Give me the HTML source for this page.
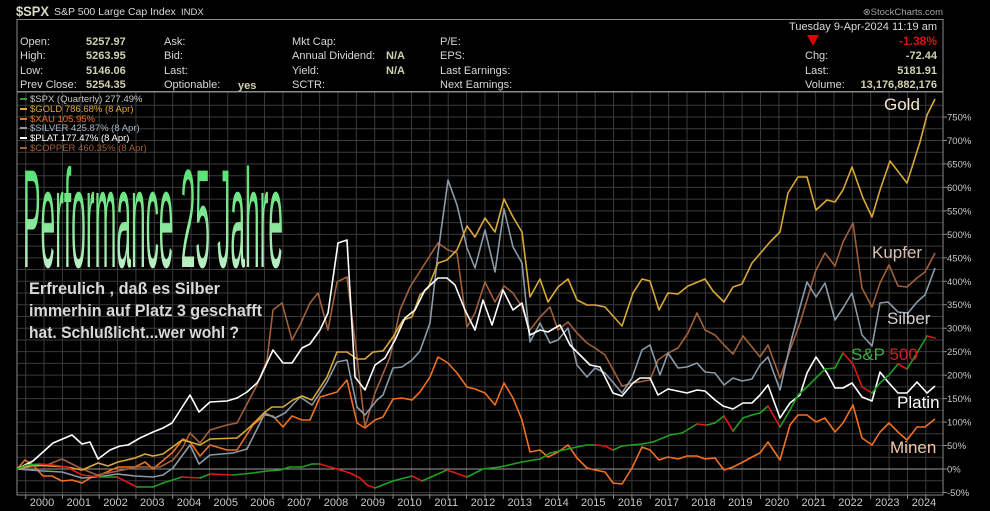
<!DOCTYPE html>
<html><head><meta charset="utf-8"><style>
html,body{margin:0;padding:0;background:#000;width:990px;height:511px;overflow:hidden}
svg{display:block;font-family:"Liberation Sans",sans-serif}
</style></head><body>
<svg width="990" height="511" viewBox="0 0 990 511" xmlns="http://www.w3.org/2000/svg">
<defs>
<linearGradient id="tg" x1="0" y1="0" x2="0" y2="1"><stop offset="0" stop-color="#3fe060"/><stop offset="0.6" stop-color="#90e8a0"/><stop offset="1" stop-color="#e8f4e8"/></linearGradient>
<linearGradient id="lg" x1="0" y1="0" x2="0" y2="1"><stop offset="0" stop-color="#f0d8b8"/><stop offset="1" stop-color="#fff4e8"/></linearGradient>
</defs>
<rect width="990" height="511" fill="#000"/>
<text x="16" y="16" fill="#d8d8c8" font-size="14" font-weight="bold" textLength="33" lengthAdjust="spacingAndGlyphs">$SPX</text>
<text x="54" y="15" fill="#d8d8d8" font-size="10.5">S&amp;P 500 Large Cap Index</text>
<text x="181" y="15" fill="#d8d8d8" font-size="9.5">INDX</text>
<text x="943" y="15" fill="#a0a0a0" font-size="9.5" text-anchor="end">⊗StockCharts.com</text>
<rect x="17" y="19.5" width="926" height="72" fill="none" stroke="#8a8a8a" stroke-width="1"/>
<g font-size="11" fill="#d8d8d8">
<text x="20" y="45">Open:</text><text x="20" y="59">High:</text><text x="20" y="74">Low:</text><text x="20" y="88">Prev Close:</text>
<text x="164" y="45">Ask:</text><text x="164" y="59">Bid:</text><text x="164" y="74">Last:</text><text x="164" y="88">Optionable:</text>
<text x="292" y="45">Mkt Cap:</text><text x="292" y="59">Annual Dividend:</text><text x="292" y="74">Yield:</text><text x="292" y="88">SCTR:</text>
<text x="440" y="45">P/E:</text><text x="440" y="59">EPS:</text><text x="440" y="74">Last Earnings:</text><text x="440" y="88">Next Earnings:</text>
<text x="805" y="59">Chg:</text><text x="805" y="74">Last:</text><text x="805" y="88">Volume:</text>
<text x="937" y="30" text-anchor="end">Tuesday  9-Apr-2024  11:19 am</text>
</g>
<g font-size="11" fill="#d0d0b0" font-weight="bold">
<text x="86" y="45">5257.97</text><text x="86" y="59">5263.95</text><text x="86" y="74">5146.06</text><text x="86" y="88">5254.35</text>
<text x="238" y="89">yes</text>
<text x="386" y="59">N/A</text><text x="386" y="74">N/A</text>
<text x="937" y="59" text-anchor="end">-72.44</text><text x="937" y="74" text-anchor="end">5181.91</text><text x="937" y="88" text-anchor="end">13,176,882,176</text>
<text x="937" y="45" text-anchor="end" fill="#e01010" font-size="12">-1.38%</text>
</g>
<polygon points="807,35 819,35 813,46" fill="#e00000"/>
<g stroke="#3a3a3a" stroke-width="1" id="grid"></g>
<rect x="17" y="92" width="926" height="403" fill="none" stroke="#8a8a8a" stroke-width="1"/>
<line x1="17" y1="469" x2="943" y2="469" stroke="#9a9a9a" stroke-width="1"/>
<g id="axis" font-size="9.5" fill="#c8c8c8"></g>
<g id="lines" fill="none" stroke-width="1.6" stroke-linejoin="round"></g>
<g font-size="9.5">
<rect x="20" y="98" width="7" height="2" fill="#2aa02a"/><text x="30" y="102" fill="#c8c8c8">$SPX (Quarterly) 277.49%</text>
<rect x="20" y="108" width="7" height="2" fill="#e0a840"/><text x="30" y="112" fill="#e0a840">$GOLD 786.68% (8 Apr)</text>
<rect x="20" y="118" width="7" height="2" fill="#f07020"/><text x="30" y="122" fill="#f07020">$XAU 105.95%</text>
<rect x="20" y="127" width="7" height="2" fill="#8a9aa8"/><text x="30" y="131" fill="#a8b4c0">$SILVER 425.87% (8 Apr)</text>
<rect x="20" y="137" width="7" height="2" fill="#fff"/><text x="30" y="141" fill="#ffffff">$PLAT 177.47% (8 Apr)</text>
<rect x="20" y="147" width="7" height="2" fill="#a0603a"/><text x="30" y="151" fill="#a0603a">$COPPER 460.35% (8 Apr)</text>
</g>
<text x="23" y="267" font-size="140" fill="url(#tg)" textLength="260" lengthAdjust="spacingAndGlyphs">Performance 25 Jahre</text>
<g font-size="16.5" font-weight="bold" fill="#d8d8d8">
<text x="29" y="294" textLength="191" lengthAdjust="spacingAndGlyphs">Erfreulich , daß es Silber</text>
<text x="29" y="316" textLength="233" lengthAdjust="spacingAndGlyphs">immerhin auf Platz 3 geschafft</text>
<text x="29" y="338" textLength="210" lengthAdjust="spacingAndGlyphs">hat. Schlußlicht...wer wohl ?</text>
</g>
<g font-size="17">
<text x="884" y="110" fill="url(#lg)">Gold</text>
<text x="872" y="258" fill="#d8c0b0">Kupfer</text>
<text x="887" y="324" fill="#d0d0d0">Silber</text>
<text x="851" y="360" fill="#40b040">S&amp;P <tspan fill="#d02020">500</tspan></text>
<text x="897" y="408" fill="#ffffff">Platin</text>
<text x="890" y="453" fill="#f0c8a8">Minen</text>
</g>
</svg>
<script>
(function(){
var NS="http://www.w3.org/2000/svg";
function el(p,n,a,t){var e=document.createElementNS(NS,n);for(var k in a)e.setAttribute(k,a[k]);if(t)e.textContent=t;p.appendChild(e);return e;}
var g=document.getElementById('grid');
for(var x=25.7;x<943;x+=18.37)el(g,'line',{x1:x,y1:92,x2:x,y2:495});
for(var v=-50;v<=775;v+=25){var y=469-v*0.4693;if(v!==0)el(g,'line',{x1:17,y1:y,x2:943,y2:y});}
var a=document.getElementById('axis');
for(var v=-50;v<=750;v+=50){var y=469-v*0.4693;el(a,'line',{x1:943,y1:y,x2:947,y2:y,stroke:'#8a8a8a'});el(a,'text',{x:947,y:y+3.5},v+'%');}
for(var i=0;i<25;i++){var x=42+i*36.75;el(a,'text',{x:x,y:506,'text-anchor':'middle','font-size':'11'},String(2000+i));}
for(var x=25.7;x<943;x+=18.37)el(a,'line',{x1:x,y1:495,x2:x,y2:499,stroke:'#8a8a8a'});
var L=document.getElementById('lines');
function P(s){return s.trim().split(/\s+/).map(function(p){return p.split(',').map(Number);});}
function poly(pts,c){el(L,'polyline',{points:pts.map(function(p){return p.join(',')}).join(' '),stroke:c});}
var xau=P("17,469 25,460 33,465 43,476 52,476 62,481 72,480 82,483 92,477 100,475 118,467 135,467 145,462 153,469 173,452 183,439 190,442 200,456 210,445 227,450 237,450 253,425 265,415 273,416 283,427 292,416 302,420 310,420 320,397 337,392 347,380 357,423 365,428 375,420 383,417 393,399 402,398 412,400 420,392 430,377 438,357 448,363 457,373 467,387 475,389 485,393 495,405 504,383 513,398 522,420 530,452 540,450 548,457 558,452 568,445 577,458 587,468 595,470 605,472 613,483 622,484 632,468 642,447 650,450 659,460 668,457 678,459 687,456 697,456 705,459 715,458 724,470 733,467 743,462 752,457 760,453 768,442 780,460 790,425 798,415 807,415 816,422 825,418 835,432 843,423 853,405 862,438 872,445 880,432 889,423 898,432 907,440 917,427 925,427 935,419");
var copper=P("17,469 30,467 47,465 62,459 80,468 97,475 113,472 137,467 160,467 173,460 183,447 190,433 200,443 210,430 227,425 237,423 257,385 267,360 273,310 282,303 292,340 300,325 310,303 318,293 328,330 337,282 347,277 357,357 365,427 375,393 390,357 400,310 410,287 438,243 448,250 457,253 467,327 475,313 485,282 495,302 504,286 513,293 522,307 530,330 540,317 550,307 558,330 568,322 577,333 587,343 595,348 605,355 622,386 633,383 650,380 658,360 668,353 678,348 688,333 697,313 705,330 715,335 724,345 733,354 743,336 752,347 760,357 768,345 780,378 790,350 800,323 807,300 816,270 825,253 835,266 843,242 853,223 862,288 872,307 880,283 889,265 898,286 907,287 917,278 925,272 935,253");
var silver=P("17,469 30,470 43,471 62,472 82,478 97,477 117,474 135,476 153,477 163,475 173,468 190,445 199,464 210,455 233,453 247,449 265,413 275,418 285,413 300,397 312,405 327,382 337,362 347,360 357,407 365,415 377,400 383,395 393,368 402,367 412,360 420,351 430,323 438,253 448,180 457,205 467,248 475,268 485,230 495,272 504,209 513,247 522,263 530,342 540,323 550,343 558,340 568,328 577,365 587,377 595,368 605,373 622,393 632,378 642,350 650,345 660,375 668,353 678,368 687,367 697,363 705,372 715,373 724,385 733,378 742,381 752,379 760,365 768,357 780,390 790,345 800,307 807,282 816,297 825,283 835,320 843,308 852,293 862,335 872,346 880,303 888,302 898,312 908,313 917,302 925,295 935,268");
var gold=P("17,469 33,465 50,466 67,467 82,470 98,463 108,466 118,462 135,458 145,454 153,456 163,454 182,440 190,442 200,445 210,439 237,438 250,427 265,412 272,407 283,407 293,400 302,396 312,400 327,377 337,352 347,352 357,359 365,359 373,352 383,351 393,337 403,320 412,317 420,295 428,288 438,263 447,260 457,250 467,226 475,237 485,218 495,232 504,199 513,217 522,232 530,297 540,279 548,302 558,287 568,279 577,300 587,305 595,305 605,307 622,326 633,293 642,279 650,281 659,310 668,293 678,294 688,286 705,279 713,291 724,302 733,287 742,284 752,263 770,242 780,232 788,193 798,177 807,177 816,210 827,200 835,202 843,190 852,167 863,198 872,217 880,190 890,161 907,183 920,142 927,115 935,99");
var plat=P("17,469 33,461 53,443 72,435 82,444 90,442 98,459 110,450 120,446 128,445 140,438 153,432 163,428 172,423 190,395 199,412 210,402 227,401 237,398 247,392 257,383 260,378 273,350 283,363 292,363 302,348 310,344 320,330 328,313 338,243 347,240 355,377 365,390 375,365 385,358 395,340 405,318 415,310 425,290 438,278 447,278 455,285 465,310 475,330 483,300 492,325 503,290 513,310 522,303 530,335 540,330 548,332 560,325 570,345 580,355 590,365 600,367 613,393 622,396 633,383 640,378 650,378 658,395 668,389 687,393 697,390 705,391 715,400 723,406 733,409 743,403 752,403 760,395 768,385 780,418 790,403 800,395 807,373 816,357 827,373 835,388 843,388 852,383 862,397 872,401 880,372 888,382 898,393 907,393 917,382 927,393 935,386");
var spx=P("17,469 27,465 40,464 53,465 67,467 82,475 100,477 117,477 137,487 153,487 163,483 182,477 200,478 210,474 233,475 253,473 267,471 280,470 290,467 302,467 312,464 320,464 337,469 350,473 360,478 367,485 375,488 393,481 412,476 422,481 447,470 467,477 483,469 500,467 522,462 540,459 550,453 568,449 577,447 587,445 595,445 605,446 613,450 622,446 642,444 653,442 670,435 682,433 697,424 707,425 715,423 724,416 733,431 743,418 752,415 760,413 768,406 780,427 790,410 798,395 807,387 816,378 825,369 835,368 843,353 853,364 862,387 872,393 880,383 889,375 898,364 907,369 917,353 927,336 935,338");
poly(xau,'#f07020');poly(copper,'#a0603a');poly(silver,'#8a9aa8');poly(gold,'#d8a838');poly(plat,'#ffffff');
for(var i=1;i<spx.length;i++){var p=spx[i-1],q=spx[i];el(L,'line',{x1:p[0],y1:p[1],x2:q[0],y2:q[1],stroke:q[1]>p[1]?'#e01818':'#20a020','stroke-linecap':'round'});}
})();
</script>
</body></html>
